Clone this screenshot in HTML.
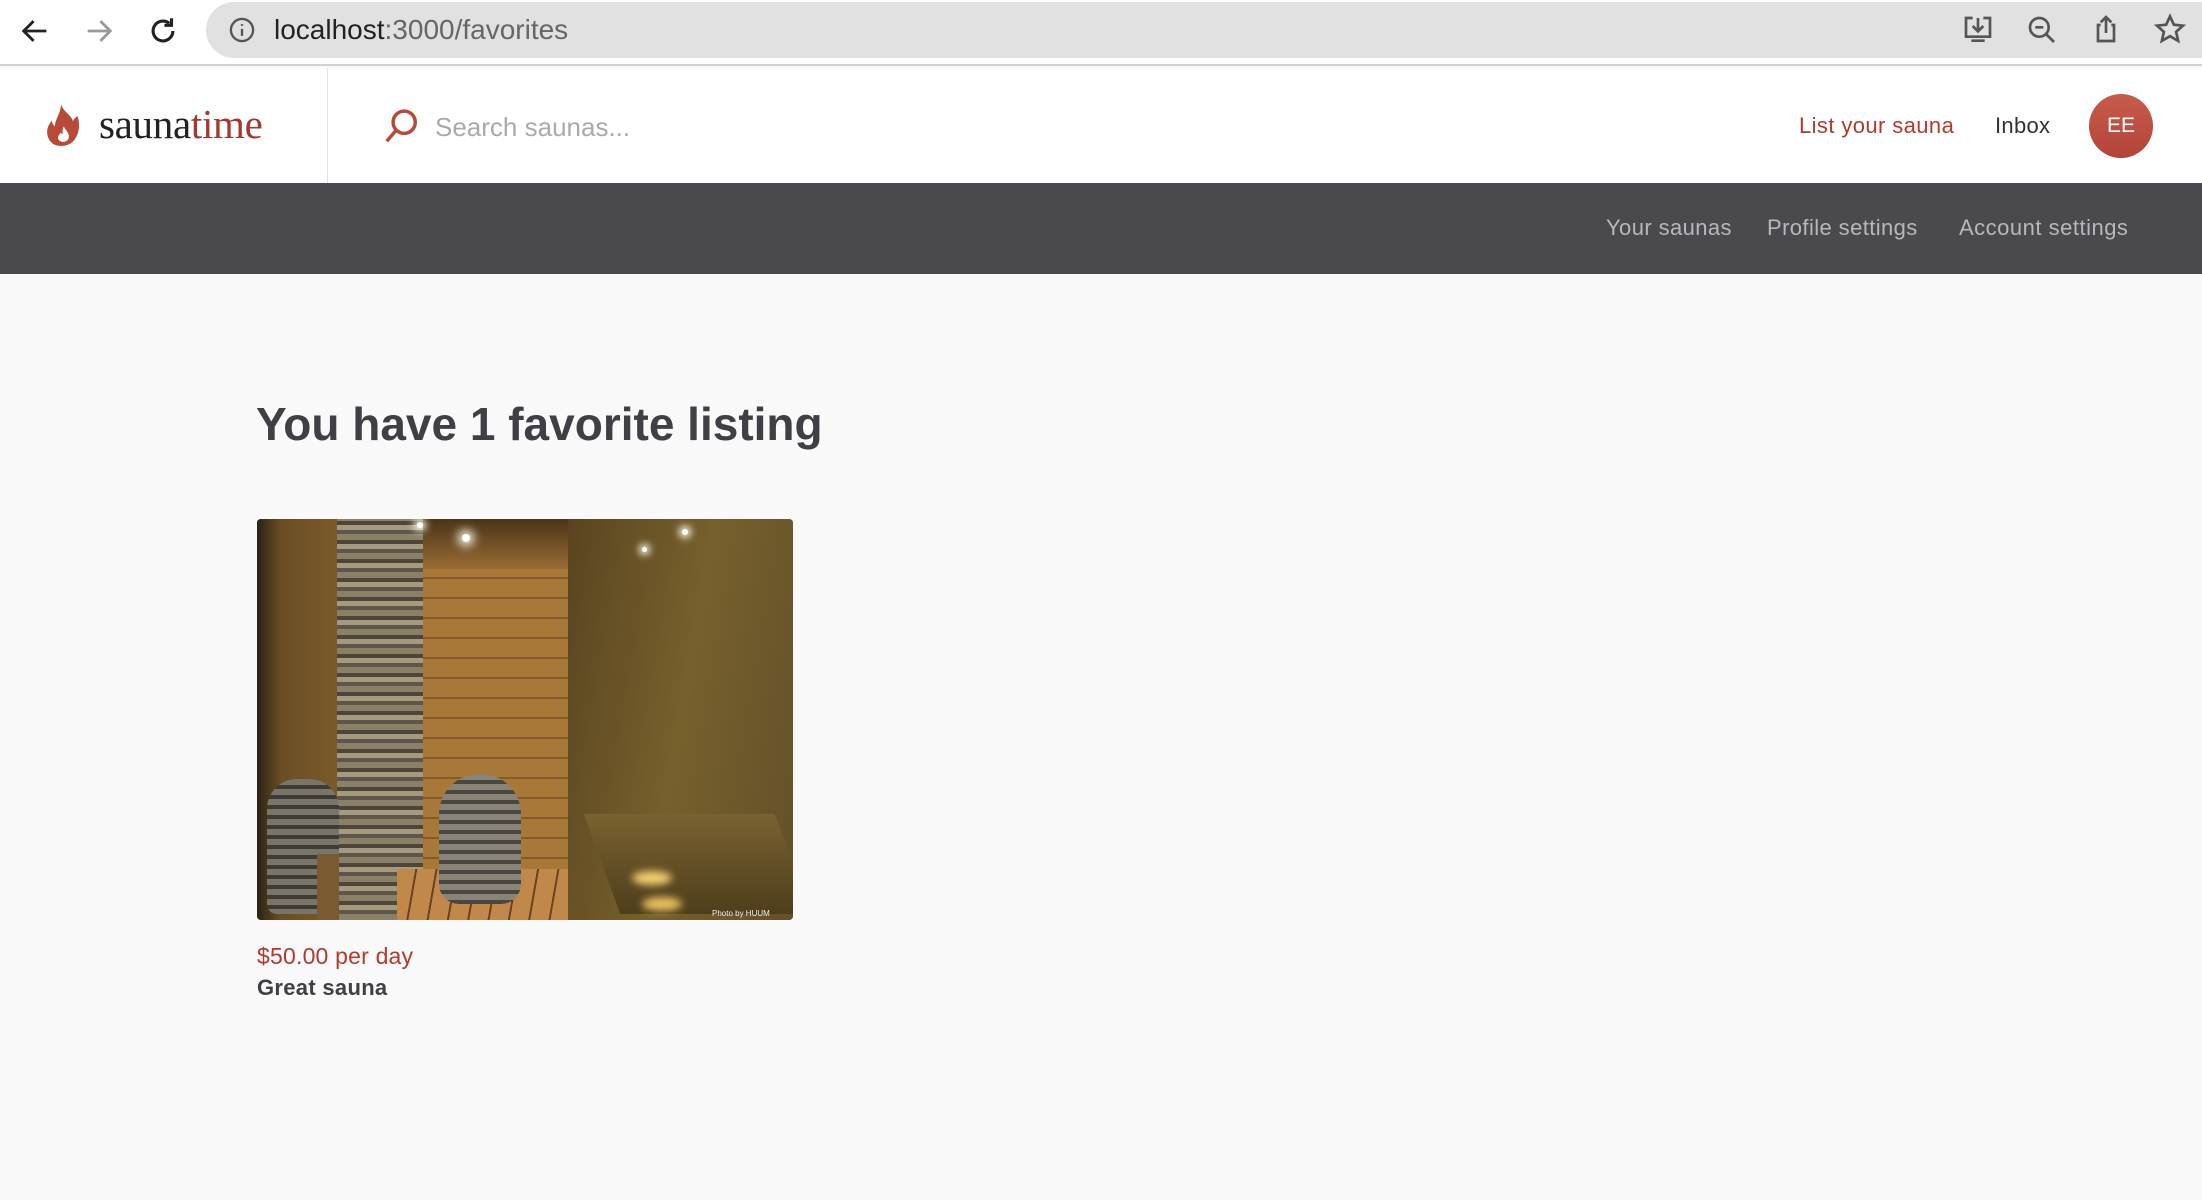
<!DOCTYPE html>
<html><head><meta charset="utf-8"><style>
*{margin:0;padding:0;box-sizing:border-box}
body{width:2202px;height:1200px;background:#f9f9f9;font-family:"Liberation Sans",sans-serif;position:relative;overflow:hidden}
.abs{position:absolute}
</style></head><body>
<!-- browser chrome -->
<div class="abs" style="left:0;top:0;width:2202px;height:66px;background:#fff;border-bottom:2px solid #d0d0d0"></div>
<svg class="abs" style="left:18px;top:14px" width="34" height="34" viewBox="0 0 24 24" fill="none" stroke="#222" stroke-width="2"><path d="M20 12H5M11 5l-7 7 7 7"/></svg>
<svg class="abs" style="left:82px;top:14px" width="34" height="34" viewBox="0 0 24 24" fill="none" stroke="#999" stroke-width="2"><path d="M4 12h15M13 5l7 7-7 7"/></svg>
<svg class="abs" style="left:146px;top:14px" width="34" height="34" viewBox="0 0 24 24" fill="none" stroke="#222" stroke-width="2.2"><path d="M19 12a7 7 0 1 1-2.5-5.4"/><path d="M18 3v5h-5" fill="none"/></svg>
<div class="abs" style="left:206px;top:2px;width:1996px;height:56px;background:#e1e1e1;border-radius:28px 0 0 28px"></div>
<svg class="abs" style="left:228px;top:16px" width="28" height="28" viewBox="0 0 24 24" fill="none" stroke="#555" stroke-width="2"><circle cx="12" cy="12" r="9.5"/><path d="M12 11v6M12 7v1.5"/></svg>
<div class="abs" style="left:274px;top:14px;font-size:28px;color:#222">localhost<span style="color:#666">:3000/favorites</span></div>
<svg class="abs" style="left:1962px;top:14px" width="32" height="32" viewBox="0 0 24 24" fill="none" stroke="#555" stroke-width="2"><path d="M8 3H3v14h18V3h-5M12 3v10M8 9l4 4 4-4M7 20h10"/></svg>
<svg class="abs" style="left:2026px;top:14px" width="32" height="32" viewBox="0 0 24 24" fill="none" stroke="#555" stroke-width="2"><circle cx="10" cy="10" r="7"/><path d="M15 15l6 6M7 10h6"/></svg>
<svg class="abs" style="left:2090px;top:13px" width="32" height="32" viewBox="0 0 24 24" fill="none" stroke="#555" stroke-width="2"><path d="M8 9H6v12h12V9h-2M12 15V3M8 7l4-4 4 4"/></svg>
<svg class="abs" style="left:2154px;top:13px" width="32" height="32" viewBox="0 0 24 24" fill="none" stroke="#555" stroke-width="2"><path d="M12 2.5l2.9 6.3 6.8.7-5.1 4.6 1.5 6.8L12 17.4l-6.1 3.5 1.5-6.8L2.3 9.5l6.8-.7z"/></svg>
<!-- header -->
<div class="abs" style="left:0;top:68px;width:2202px;height:115px;background:#fff"></div>
<div class="abs" style="left:327px;top:68px;width:1px;height:115px;background:#e2e2e2"></div>
<svg class="abs" style="left:46px;top:104px" width="36" height="42" viewBox="0 0 24 28"><path d="M10 0c1 5 8 8 8 12 0-2 2-3 3-4 2 6 1 13-3 17-4 4-12 4-15 0-4-5-2-11 1-14 0 2 1 3 2 4 0-5 4-9 4-15z" fill="#b94a3a"/><path d="M12 15c1 3 4 4 3 8-1 3-6 3-7 0 0-2 1-3 2-4 0 1 1 1 1 1 0-2 0-4 1-5z" fill="#fff"/></svg>
<div class="abs" style="left:99px;top:100px;font-family:'Liberation Serif',serif;font-size:41px;color:#222;letter-spacing:-0.3px">sauna<span style="color:#a33a30">time</span></div>
<svg class="abs" style="left:382px;top:108px" width="38" height="38" viewBox="0 0 24 24" fill="none" stroke="#b94a3a" stroke-width="2.2"><circle cx="14" cy="9" r="7"/><path d="M9 14l-6 7"/></svg>
<div class="abs" style="left:435px;top:112px;font-size:26px;color:#aaa">Search saunas...</div>
<div class="abs" style="left:1799px;top:113px;font-size:22px;color:#b33a2e;letter-spacing:0.4px">List your sauna</div>
<div class="abs" style="left:1995px;top:113px;font-size:22px;color:#333;letter-spacing:0.3px">Inbox</div>
<div class="abs" style="left:2089px;top:94px;width:64px;height:64px;border-radius:50%;background:linear-gradient(#c85c4a,#b2443a);color:#fff;font-size:21px;text-align:center;line-height:64px">EE</div>
<!-- dark nav -->
<div class="abs" style="left:0;top:183px;width:2202px;height:91px;background:#4a494e"></div>
<div class="abs" style="left:1606px;top:215px;font-size:22px;color:#b8b7bc;letter-spacing:0.4px">Your saunas</div>
<div class="abs" style="left:1767px;top:215px;font-size:22px;color:#b8b7bc;letter-spacing:0.4px">Profile settings</div>
<div class="abs" style="left:1959px;top:215px;font-size:22px;color:#b8b7bc;letter-spacing:0.5px">Account settings</div>
<!-- content -->
<div class="abs" style="left:256px;top:397px;font-size:46px;font-weight:bold;color:#3f3f46;letter-spacing:0px">You have 1 favorite listing</div>
<div class="abs" style="left:257px;top:519px;width:536px;height:401px;border-radius:4px;overflow:hidden;background:#6b5024">
  <div class="abs" style="left:0;top:0;width:80px;height:401px;background:linear-gradient(90deg,#2a2216,#6a4e24 30%,#7a5a2a)"></div>
  <div class="abs" style="left:80px;top:0;width:86px;height:401px;background:repeating-linear-gradient(0deg,#8a8068 0 6px,#5e5648 6px 10px,#a59a80 10px 15px,#4c4538 15px 19px)"></div>
  <div class="abs" style="left:166px;top:0;width:145px;height:360px;background:repeating-linear-gradient(180deg,#a87838 0 18px,#86592a 18px 20px);"></div>
  <div class="abs" style="left:166px;top:0;width:145px;height:50px;background:linear-gradient(#4a3418,#9a6c34)"></div>
  <div class="abs" style="left:311px;top:0;width:225px;height:401px;background:linear-gradient(100deg,#5a4420,#76602c 50%,#64502a)"></div>
  <div class="abs" style="left:345px;top:295px;width:191px;height:100px;background:linear-gradient(#7a6230,#4e3e1c);transform:skewX(20deg)"></div>
  <div class="abs" style="left:140px;top:350px;width:171px;height:51px;background:repeating-linear-gradient(100deg,#c0884a 0 18px,#6a4420 18px 20px)"></div>
  <div class="abs" style="left:182px;top:255px;width:82px;height:130px;border-radius:40px 40px 20px 20px;background:repeating-linear-gradient(180deg,#8a8478 0 6px,#4a4640 6px 10px)"></div>
  <div class="abs" style="left:10px;top:260px;width:72px;height:135px;border-radius:30px 30px 10px 10px;background:repeating-linear-gradient(180deg,#7a756a 0 6px,#3e3a34 6px 10px)"></div>
  <div class="abs" style="left:60px;top:335px;width:22px;height:66px;background:#7a5a30"></div>
  <div class="abs" style="left:205px;top:15px;width:8px;height:8px;border-radius:50%;background:#fff;box-shadow:0 0 10px 4px #ffe"></div>
  <div class="abs" style="left:160px;top:3px;width:6px;height:6px;border-radius:50%;background:#fff;box-shadow:0 0 8px 3px #ffe"></div>
  <div class="abs" style="left:425px;top:10px;width:6px;height:6px;border-radius:50%;background:#fff;box-shadow:0 0 8px 3px #ffe"></div>
  <div class="abs" style="left:385px;top:28px;width:5px;height:5px;border-radius:50%;background:#fff;box-shadow:0 0 8px 3px #ffe"></div>
  <div class="abs" style="left:375px;top:352px;width:40px;height:14px;border-radius:50%;background:#f0d070;filter:blur(4px)"></div>
  <div class="abs" style="left:385px;top:378px;width:40px;height:14px;border-radius:50%;background:#e8c060;filter:blur(4px)"></div>
  <div class="abs" style="left:455px;top:390px;font-size:8px;color:#eee;white-space:nowrap">Photo by HUUM</div>
</div>
<div class="abs" style="left:257px;top:943px;font-size:23px;color:#b33a2e;font-weight:500;letter-spacing:0.2px">$50.00 per day</div>
<div class="abs" style="left:257px;top:975px;font-size:22px;font-weight:bold;color:#3f3f46;letter-spacing:0.3px">Great sauna</div>
</body></html>
